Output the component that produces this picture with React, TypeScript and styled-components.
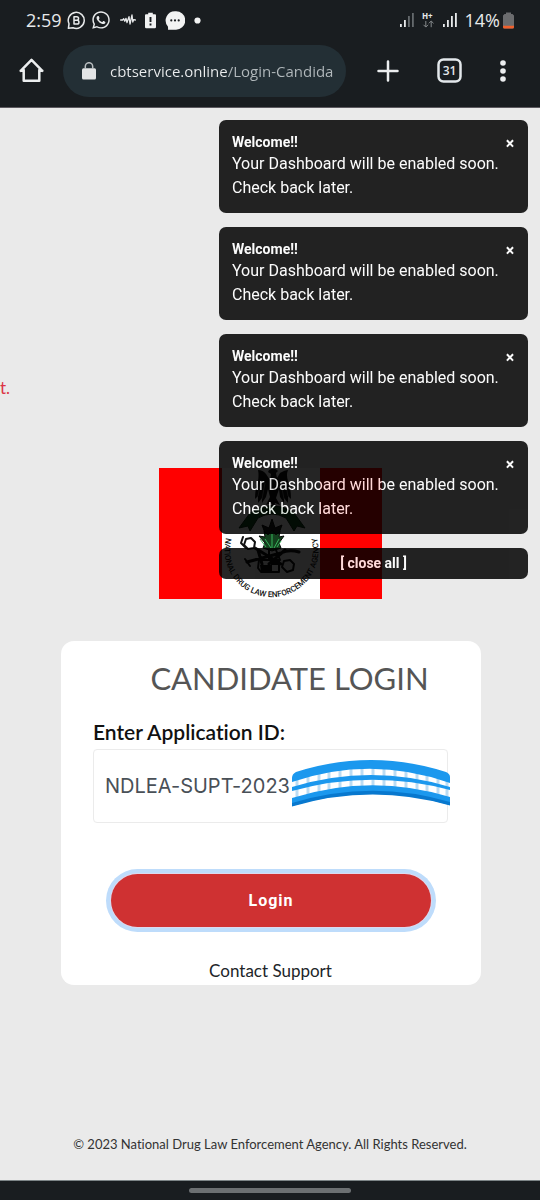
import React from "react";
import styled, { createGlobalStyle } from "styled-components";
import { FaWhatsapp } from "react-icons/fa";

const GlobalStyle = createGlobalStyle`
  *, *::before, *::after { box-sizing: border-box; }
  body {
    margin: 0;
    background: #eaeaea;
    font-family: Lato, sans-serif;
    font-variant-ligatures: none;
    color: #212529;
  }
  button, input { font: inherit; }
  button { padding: 0; border: 0; background: none; color: inherit; cursor: pointer; }
`;

const Screen = styled.div`
  display: flex;
  flex-direction: column;
  min-height: 100vh;
  overflow: hidden;
`;

const BrowserHeader = styled.header`
  background: #191d20;
  color: #e8eaeb;
  border-bottom: 1px solid #5d5a60;
  font-family: "Open Sans", sans-serif;
`;

const StatusBar = styled.div`
  display: flex;
  align-items: center;
  justify-content: space-between;
  height: 40px;
  padding: 0 26px;
`;

const StatusGroup = styled.div<{ $gap: number }>`
  display: flex;
  align-items: center;
  gap: ${(p) => p.$gap}px;
`;

const StatusText = styled.span`
  font-size: 18px;
  line-height: 24px;
`;

const Toolbar = styled.div`
  display: flex;
  align-items: center;
  height: 67px;
  padding: 0 34px 6px 19px;
`;

const IconButton = styled.button`
  display: flex;
  align-items: center;
  justify-content: center;
  flex: none;
  height: 40px;
`;

const AddressBar = styled.div`
  display: flex;
  align-items: center;
  gap: 14px;
  flex: 1;
  min-width: 0;
  height: 52px;
  margin: 0 31px 0 19px;
  padding: 0 8px 0 19px;
  border-radius: 26px;
  background: #232f35;
  svg { flex: none; }
`;

const AddressInput = styled.input`
  flex: 1;
  min-width: 0;
  height: 28px;
  padding: 0;
  border: 0;
  outline: 0;
  font-size: 15px;
  color: transparent;
  background: linear-gradient(90deg, #eceeef 117px, #b3babd 117px);
  background-clip: text;
  -webkit-background-clip: text;
`;

const ToolbarActions = styled.div`
  display: flex;
  align-items: center;
  gap: 38px;
`;

const Page = styled.main`
  position: relative;
  flex: 1;
  display: flex;
  flex-direction: column;
  align-items: center;
  padding-top: 268px;
`;

const Ticker = styled.p`
  align-self: stretch;
  margin: 0;
  font-size: 17px;
  line-height: 24px;
  color: #dc3545;
`;

const Logo = styled.svg`
  display: block;
  margin-top: 68px;
`;

const Card = styled.form`
  align-self: stretch;
  display: flex;
  flex-direction: column;
  margin: 42px 59px 0 61px;
  padding: 15px 33px 2px 32px;
  border-radius: 13px;
  background: #fff;
`;

const Title = styled.h1`
  margin: 0;
  padding-left: 38px;
  text-align: center;
  font-size: 31px;
  font-weight: 400;
  line-height: 44px;
  color: #555;
`;

const FieldLabel = styled.label`
  margin-top: 15px;
  font-size: 21px;
  font-weight: 600;
  line-height: 34px;
  color: #111;
`;

const Field = styled.div`
  position: relative;
  display: flex;
`;

const TextInput = styled.input`
  flex: 1;
  min-width: 0;
  height: 74px;
  padding: 0 11px;
  border: 1px solid #ebebeb;
  border-radius: 4px;
  outline: 0;
  background: #fff;
  font-family: Inter, sans-serif;
  font-size: 20px;
  color: #495057;
`;

const Scribble = styled.svg`
  position: absolute;
  right: -3px;
  top: 11px;
`;

const LoginButton = styled.button`
  height: 53px;
  margin: 51px 17px 0 18px;
  border-radius: 27px;
  background: #cf3132;
  box-shadow: 0 0 0 1px #dcd9ee, 0 0 0 5px #bedcfb;
  font-family: Roboto, sans-serif;
  font-size: 16px;
  font-weight: 700;
  letter-spacing: 1px;
  color: #fff;
`;

const SupportLink = styled.a`
  align-self: center;
  margin-top: 31px;
  font-size: 17px;
  line-height: 25px;
  color: #212529;
  text-decoration: none;
`;

const Copyright = styled.footer`
  margin-top: auto;
  padding: 24px 0 26px;
  text-align: center;
  font-size: 13px;
  line-height: 20px;
  color: #333;
`;

const Toasts = styled.aside`
  position: absolute;
  top: 12px;
  right: 12px;
  display: flex;
  flex-direction: column;
  gap: 14px;
  width: 309px;
  font-family: Roboto, sans-serif;
  color: #fff;
`;

const ToastBox = styled.section`
  display: flex;
  align-items: flex-start;
  justify-content: space-between;
  padding: 13px;
  border-radius: 7px;
  background: #000;
  opacity: 0.85;
`;

const ToastTitle = styled.h2`
  margin: 0;
  font-size: 14px;
  font-weight: 700;
  line-height: 19px;
`;

const ToastMessage = styled.p`
  margin: 0;
  font-size: 16px;
  line-height: 24px;
`;

const ToastClose = styled.button`
  width: 10px;
  font-size: 16px;
  font-weight: 700;
  line-height: 22px;
`;

const CloseAll = styled.button`
  height: 31px;
  padding-bottom: 2px;
  border-radius: 7px;
  background: #000;
  opacity: 0.85;
  font-size: 14px;
  font-weight: 700;
`;

const GestureBar = styled.div`
  display: flex;
  align-items: center;
  justify-content: center;
  height: 20px;
  border-top: 1px solid #7d8587;
  background: #191d20;
`;

const GestureHandle = styled.div`
  width: 30%;
  height: 5px;
  border-radius: 3px;
  background: #6c7072;
`;

const ChatBIcon = () => (
  <svg width="19" height="19" viewBox="0 0 19 19" fill="none" stroke="#e8eaeb" strokeWidth="1.5" strokeLinejoin="round">
    <path d="M1.4 17.3 2 12.8A8 8 0 1 1 6 16.7z" />
    <path d="M7 5.8h2.8a1.7 1.7 0 0 1 0 3.5H7zM7 9.3h3.1a1.8 1.8 0 0 1 0 3.7H7z" />
  </svg>
);

const PulseIcon = () => (
  <svg width="16" height="14" viewBox="0 0 16 14" fill="none" stroke="#e8eaeb" strokeWidth="1.3" strokeLinejoin="round" strokeLinecap="round">
    <path d="M.6 7h2L3.7 5.8 4.8 8.2 6 5.3 7 9.5 9 3.6 10 11 12 2 12.8 9 13.6 6.7 15.4 7" />
  </svg>
);

const BatteryAlertIcon = () => (
  <svg width="11" height="17" viewBox="0 0 11 17">
    <path fill="#f0f1f1" d="M3.2.8h4.6v1.5H10q1 0 1 1V15q0 1.2-1.2 1.2H1.2Q0 16.2 0 15V3.3q0-1 1-1h2.2z" />
    <path stroke="#191d20" strokeWidth="1.9" d="M5.5 5v5M5.5 11.5v2" />
  </svg>
);

const MessageIcon = () => (
  <svg width="20" height="19" viewBox="0 0 20 19">
    <path fill="#f2f3f3" d="M10 .2a9.3 9.3 0 1 1 0 18.5H3q.2-1.5-.1-3.2A9.3 9.3 0 0 1 10 .2z" />
    <g fill="#191d20"><circle cx="6.3" cy="9.4" r="1.1" /><circle cx="10" cy="9.4" r="1.1" /><circle cx="13.7" cy="9.4" r="1.1" /></g>
  </svg>
);

const DotIcon = () => (
  <svg width="7" height="7" viewBox="0 0 7 7"><circle cx="3.5" cy="3.5" r="3.1" fill="#f2f3f3" /></svg>
);

const SignalIcon = ({ bars }: { bars: number }) => (
  <svg width="14" height="16" viewBox="0 0 14 16">
    {[0, 1, 2, 3].map((i) => (
      <rect key={i} x={i * 4} y={[12, 8, 4, 1][i]} width="1.8" height={[3, 7, 11, 14][i]} fill={i < bars ? "#e8eaeb" : "#656a6d"} />
    ))}
  </svg>
);

const DataIcon = () => (
  <svg width="13" height="22" viewBox="0 0 13 22" overflow="visible">
    <text x="0" y="10" fontSize="8" fontWeight="700" fill="#e8eaeb">H+</text>
    <path d="M3.8 12v6M1.5 15.8l2.3 2.3 2.3-2.3M9.2 18.2v-6M6.9 14.3 9.2 12l2.3 2.3" fill="none" stroke="#85898b" strokeWidth="1" />
  </svg>
);

const BatteryLowIcon = () => (
  <svg width="11" height="17" viewBox="0 0 11 17">
    <path fill="#6b6c6e" d="M3 .5h5V2h1.5L11 3.5V15q0 1.5-1.5 1.5h-8Q0 16.5 0 15V3.5L1.5 2H3z" />
    <path fill="#f0602c" d="M0 13.8h11V15q0 1.5-1.5 1.5h-8Q0 16.5 0 15z" />
  </svg>
);

const HomeIcon = () => (
  <svg width="25" height="25" viewBox="0 0 25 25" fill="none" stroke="#eceeef" strokeWidth="2.5" strokeLinejoin="round" strokeLinecap="round">
    <path d="M4.7 12v10.8h15.6V12M1.7 12.8 12.5 1.9l10.8 10.9M1.7 12.8h3M20.3 12.8h3" />
  </svg>
);

const LockIcon = () => (
  <svg width="14" height="18" viewBox="0 0 14 18">
    <rect y="6.3" width="14" height="11.2" rx="1.5" fill="#e3e5e6" />
    <path d="M3.3 7V4.4a3.7 3.7 0 0 1 7.4 0V7" fill="none" stroke="#b9bec0" strokeWidth="1.5" />
  </svg>
);

const PlusIcon = () => (
  <svg width="22" height="22" viewBox="0 0 22 22" stroke="#eceeef" strokeWidth="2.5" strokeLinecap="round">
    <path d="M11 1.5v19M1.5 11h19" />
  </svg>
);

const TabsIcon = () => (
  <svg width="25" height="25" viewBox="0 0 25 25">
    <rect x="1.5" y="1.5" width="22" height="22" rx="5" fill="none" stroke="#e3e8eb" strokeWidth="2.5" />
    <text x="12.5" y="16.8" textAnchor="middle" fontSize="12" fontWeight="600" fill="#e3e8eb">31</text>
  </svg>
);

const MenuIcon = () => (
  <svg width="6" height="22" viewBox="0 0 6 22" fill="#eceeef">
    <circle cx="3" cy="3" r="2.8" /><circle cx="3" cy="11" r="2.8" /><circle cx="3" cy="19" r="2.8" />
  </svg>
);

const AgencyLogo = () => (
  <Logo width="223" height="131" viewBox="0 0 223 131" role="img" aria-label="National Drug Law Enforcement Agency">
    <path fill="#f00" d="M0 0h223v131H0z" />
    <path fill="#fff" d="M63 0h98v131H63z" />
    <g fill="#111">
      <path d="M110 2q6-3 9 1l-2 2 1 5 3-5q5-3 8-3-2 5 0 11 3 8 3 18l-3-3v7l-4-5v5l-4-6-1-8-3 9 4 7-5-2-1 4-3-4-5 2 4-8-2-8-2 8-4 6v-5l-4 5v-7l-3 3q0-10 3-18 1-6 0-11 5 0 8 4l4 6 1-6-3-2z" />
    </g>
    <g fill="none" stroke="#777" strokeWidth="1"><path d="m102 12-3 16M106 15l-3 16M126 12l3 16M122 15l3 16" /></g>
    <path fill="#14521f" stroke="#0b2b10" d="M80 60 91 45q22-15 44 0l11 15-8-2-3 5-8-13q-14-8-28 0l-8 13-2-5z" />
    <g fill="#1b1f1b" stroke="#070b07">
      <path d="m113 51 3 9 7-3-3 8-7 5-7-5-3-8 7 3z" />
      <path fill="#14401e" d="m113 62 4 5 4-4-1 6 5-1-5 7 2 5-9 3-9-3 2-5-6-7 6 1-1-6 4 4z" />
    </g>
    <g fill="none" stroke="#37b45b" strokeWidth="1"><path d="m112 80-6-9M113 80V66M115 80l5-9M107 79l-6-8M118 79l4-6" /></g>
    <g fill="none" stroke="#111" strokeLinejoin="round" strokeLinecap="round">
      <path strokeWidth="2" d="m87 71 5-1 4 4-1 6-6 1-4-4zM84 69l-2 6 5 5" />
      <path strokeWidth="3" d="m96 80 26 16M99 82l4 14M126 82l-16 14M88 94l34-9q8-4 18-1" />
      <path strokeWidth="2" d="M100 92h20v12h-18l-3-4zM125 93l6-1 4 4-1 6-6 2-5-5zM86 91l5 7M110 82v10M117 82l4 10" />
    </g>
    <path fill="#111" d="M101 97h12v7h-11zM112 91h8v6h-8z" />
    <path id="seal-arc" fill="none" d="M68 67A47 47 0 1 0 157 67" />
    <text fontFamily="Roboto, sans-serif" fontSize="8" fontWeight="500" fill="#111">
      <textPath href="#seal-arc" startOffset="50%" textAnchor="middle">NATIONAL DRUG LAW ENFORCEMENT AGENCY</textPath>
    </text>
  </Logo>
);

const ticks = [6, 17, 28, 38, 49, 60, 71, 82, 93, 104, 115, 126, 136, 147, 156];

const RedactionMark = () => (
  <Scribble width="160" height="47" viewBox="0 0 160 47" aria-hidden="true">
    <path fill="#fff" d="M1 18Q80-12 159 18v25Q80 22 1 43z" />
    <g stroke="#bcdcf3" strokeWidth="3">
      {ticks.map((x) => {
        const rise = Math.pow((x - 80) / 80, 2) * 11;
        return <path key={x} d={`M${x} ${8 + rise}V${29 + rise}`} />;
      })}
    </g>
    <g fill="#1b98ee">
      <path d="M1 18q0-4 4-6 75-24 150 0 4 2 4 5v6Q80-5 1 22z" />
      <path d="M1 27Q80 3 159 27v3Q80 9 1 31z" />
      <path d="M1 38Q80 13 159 37v8Q80 22 1 46z" />
    </g>
    <path fill="#0878ce" d="M1 43Q80 19 159 42v3.5Q80 23 1 46.5z" />
  </Scribble>
);

const Toast = () => (
  <ToastBox>
    <div>
      <ToastTitle>Welcome!!</ToastTitle>
      <ToastMessage>
        Your Dashboard will be enabled soon.
        <br />
        Check back later.
      </ToastMessage>
    </div>
    <ToastClose type="button" aria-label="Close notification">×</ToastClose>
  </ToastBox>
);

export default function App() {
  return (
    <Screen>
      <GlobalStyle />
      <BrowserHeader>
        <StatusBar>
          <StatusGroup $gap={9}>
            <StatusGroup $gap={5}>
              <StatusText>2:59</StatusText>
              <ChatBIcon />
              <FaWhatsapp size={20} />
            </StatusGroup>
            <PulseIcon />
            <BatteryAlertIcon />
            <MessageIcon />
            <DotIcon />
          </StatusGroup>
          <StatusGroup $gap={8}>
            <SignalIcon bars={2} />
            <DataIcon />
            <SignalIcon bars={4} />
            <StatusGroup $gap={3}>
              <StatusText>14%</StatusText>
              <BatteryLowIcon />
            </StatusGroup>
          </StatusGroup>
        </StatusBar>
        <Toolbar>
          <IconButton type="button" aria-label="Home"><HomeIcon /></IconButton>
          <AddressBar>
            <LockIcon />
            <AddressInput aria-label="Address" defaultValue="cbtservice.online/Login-Candida" />
          </AddressBar>
          <ToolbarActions>
            <IconButton type="button" aria-label="New tab"><PlusIcon /></IconButton>
            <IconButton type="button" aria-label="Open tabs"><TabsIcon /></IconButton>
            <IconButton type="button" aria-label="Menu"><MenuIcon /></IconButton>
          </ToolbarActions>
        </Toolbar>
      </BrowserHeader>

      <Page>
        <Ticker>t.</Ticker>
        <AgencyLogo />
        <Card onSubmit={(e) => e.preventDefault()}>
          <Title>CANDIDATE LOGIN</Title>
          <FieldLabel htmlFor="application-id">Enter Application ID:</FieldLabel>
          <Field>
            <TextInput id="application-id" defaultValue="NDLEA-SUPT-2023" />
            <RedactionMark />
          </Field>
          <LoginButton type="submit">Login</LoginButton>
          <SupportLink href="#support">Contact Support</SupportLink>
        </Card>
        <Copyright>© 2023 National Drug Law Enforcement Agency. All Rights Reserved.</Copyright>
        <Toasts aria-label="Notifications">
          {[1, 2, 3, 4].map((id) => <Toast key={id} />)}
          <CloseAll type="button">[ close all ]</CloseAll>
        </Toasts>
      </Page>

      <GestureBar><GestureHandle /></GestureBar>
    </Screen>
  );
}
